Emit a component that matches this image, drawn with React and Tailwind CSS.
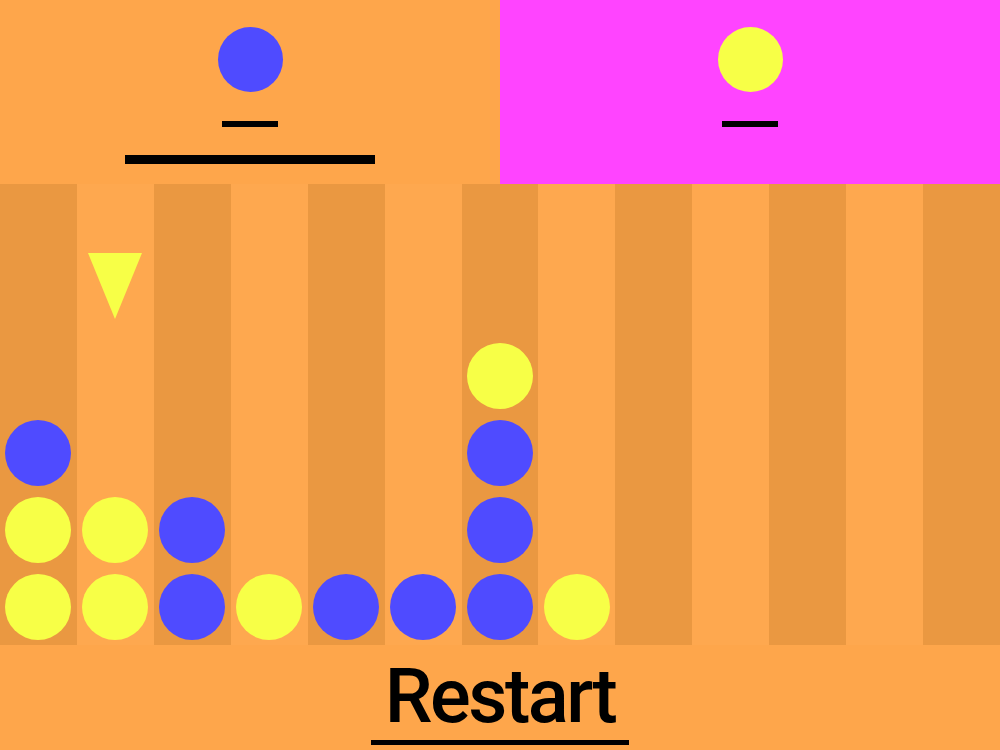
import React from "react";

const ROWS = 6;

// board[col] lists pieces from the bottom up: "b" = blue, "y" = yellow
const board = [
  ["y", "y", "b"],
  ["y", "y"],
  ["b", "b"],
  ["y"],
  ["b"],
  ["b"],
  ["b", "b", "b", "y"],
  ["y"],
  [],
  [],
  [],
  [],
  [],
];

function Piece({ color }) {
  return (
    <div
      className={
        "h-[66px] w-[66px] rounded-full " +
        (color === "b" ? "bg-[#4f4bff]" : "bg-[#f7ff47]")
      }
    />
  );
}

function Column({ index, pieces, hovered }) {
  const cells = [];
  for (let r = ROWS - 1; r >= 0; r--) {
    cells.push(
      <div key={r} className="flex flex-1 items-center justify-center">
        {pieces[r] ? <Piece color={pieces[r]} /> : null}
      </div>
    );
  }
  return (
    <div
      className={
        "relative flex flex-col " +
        (index % 2 === 0 ? "bg-[#ea9841]" : "bg-[#fea84f]")
      }
    >
      {hovered && (
        <div className="absolute left-1/2 top-[69px] -translate-x-1/2">
          <svg width="54" height="66" viewBox="0 0 54 66">
            <polygon points="0,0 54,0 27,66" fill="#f7ff47" />
          </svg>
        </div>
      )}
      {cells}
    </div>
  );
}

export default function App() {
  return (
    <div
      className="flex h-[750px] w-[1000px] flex-col bg-[#fea64b]"
      style={{ fontFamily: "Roboto, 'Liberation Sans', sans-serif" }}
    >
      {/* players */}
      <div className="flex h-[184px]">
        <div className="flex flex-1 flex-col items-center bg-[#fea64b] pt-[27px]">
          <div className="h-[65px] w-[65px] rounded-full bg-[#4f4bff]" />
          <div className="mt-[29px] h-[6px] w-[56px] bg-black" />
          <div className="mt-[28px] h-[9px] w-[250px] bg-black" />
        </div>
        <div className="flex flex-1 flex-col items-center bg-[#ff44ff] pt-[27px]">
          <div className="h-[65px] w-[65px] rounded-full bg-[#f7ff47]" />
          <div className="mt-[29px] h-[6px] w-[56px] bg-black" />
        </div>
      </div>

      {/* board */}
      <div className="grid h-[461px] grid-cols-13">
        {board.map((pieces, i) => (
          <Column key={i} index={i} pieces={pieces} hovered={i === 1} />
        ))}
      </div>

      {/* controls */}
      <div className="flex flex-1 items-start justify-center">
        <button className="mt-[8px] border-b-[5px] border-black px-[14px] text-[76px] font-medium leading-[87px] tracking-[-2.5px] text-black">
          Restart
        </button>
      </div>
    </div>
  );
}
